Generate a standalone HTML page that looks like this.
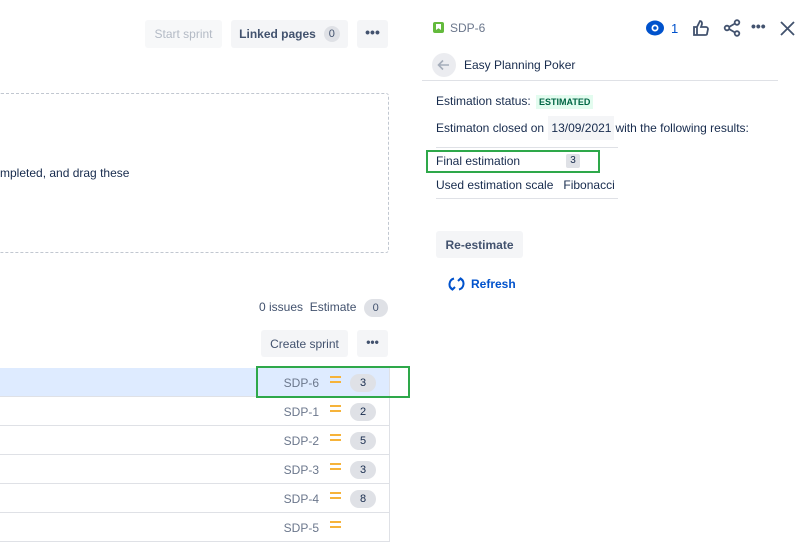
<!DOCTYPE html>
<html><head><style>
*{margin:0;padding:0;box-sizing:border-box}
body{width:806px;height:548px;overflow:hidden;background:#fff;font-family:"Liberation Sans",sans-serif;font-size:12px;color:#172b4d;position:relative}
.a{position:absolute}
.btn{position:absolute;background:#f4f5f7;border-radius:3px;display:flex;align-items:center;justify-content:center;color:#42526e}
.badge{display:inline-block;background:#dfe1e6;border-radius:10px;font-size:11px;text-align:center}
.row{position:absolute;left:0;width:390px;height:29px;border-bottom:1px solid #dfe1e6;border-right:1px solid #dfe1e6}
.row .k{position:absolute;right:70px;top:8px;color:#6b778c;font-size:12px}
.row .eq{position:absolute;left:330px;top:8px;width:11px;height:7px;border-top:2px solid #f6b33a;border-bottom:2px solid #f6b33a}
.row .b{position:absolute;left:350px;top:6px;width:26px;height:18px;line-height:18px}
</style></head><body>
<div class="btn" style="left:145px;top:20px;width:77px;height:28px;color:#b3bac5;background:#f7f8f9">Start sprint</div>
<div class="btn" style="left:231px;top:20px;width:117px;height:28px;font-weight:bold">Linked pages <span class="badge" style="margin-left:8px;width:16px;height:16px;line-height:16px;font-weight:normal">0</span></div>
<div class="btn" style="left:357px;top:20px;width:31px;height:28px;font-weight:bold;font-size:14px;padding-bottom:5px">•••</div>
<div class="a" style="left:-2px;top:93px;width:391px;height:160px;border:1px dashed #c1c7d0;border-radius:3px"></div>
<div class="a" style="left:0;top:166px;font-size:12px">mpleted, and drag these</div>
<div class="a" style="left:259px;top:299px;color:#42526e">0 issues&nbsp; Estimate <span class="badge" style="width:24px;height:18px;line-height:18px;margin-left:4px">0</span></div>
<div class="btn" style="left:261px;top:330px;width:87px;height:27px">Create sprint</div>
<div class="btn" style="left:357px;top:330px;width:31px;height:27px;font-weight:bold;font-size:12px;padding-bottom:4px">•••</div>
<div class="row" style="top:368px;background:#deebff"><span class="k">SDP-6</span><span class="eq"></span><span class="badge b">3</span></div>
<div class="row" style="top:397px"><span class="k">SDP-1</span><span class="eq"></span><span class="badge b">2</span></div>
<div class="row" style="top:426px"><span class="k">SDP-2</span><span class="eq"></span><span class="badge b">5</span></div>
<div class="row" style="top:455px"><span class="k">SDP-3</span><span class="eq"></span><span class="badge b">3</span></div>
<div class="row" style="top:484px"><span class="k">SDP-4</span><span class="eq"></span><span class="badge b">8</span></div>
<div class="row" style="top:513px"><span class="k">SDP-5</span><span class="eq"></span></div>
<div class="a" style="left:256px;top:366px;width:154px;height:32px;border:2px solid #2ea84a"></div>

<div class="a" style="left:433px;top:22px;width:11px;height:11px;background:#63ba3c;border-radius:2px"><div style="position:absolute;left:3px;top:2px;width:5px;height:6px;background:#fff;clip-path:polygon(0 0,100% 0,100% 100%,50% 70%,0 100%)"></div></div>
<div class="a" style="left:450px;top:21px;color:#6b778c">SDP-6</div>
<svg class="a" style="left:645px;top:19px" width="20" height="18" viewBox="0 0 20 18"><ellipse cx="10" cy="9" rx="9" ry="7.5" fill="#0052cc"/><circle cx="10" cy="9" r="3.5" fill="#fff"/><circle cx="10" cy="9" r="1.8" fill="#0052cc"/></svg>
<div class="a" style="left:671px;top:21px;color:#0052cc;font-size:13px">1</div>
<svg class="a" style="left:692px;top:19px" width="18" height="18" viewBox="0 0 18 18" fill="none" stroke="#42526e" stroke-width="1.8"><path d="M2 8h3v8H2zM5 8l3-6c2 0 2 2 2 3l-1 3h5c1 0 2 1 2 2l-1 5c0 1-1 1-2 1H5"/></svg>
<svg class="a" style="left:723px;top:19px" width="18" height="18" viewBox="0 0 18 18" fill="none" stroke="#42526e" stroke-width="1.8"><circle cx="4" cy="9" r="2.3"/><circle cx="14" cy="3.5" r="2.3"/><circle cx="14" cy="14.5" r="2.3"/><path d="M6 8l6-3.5M6 10l6 3.5"/></svg>
<div class="a" style="left:751px;top:18px;font-size:14px;font-weight:bold;color:#42526e">•••</div>
<svg class="a" style="left:780px;top:21px" width="15" height="15" viewBox="0 0 15 15" stroke="#42526e" stroke-width="1.8"><path d="M1 1L14 14M14 1L1 14"/></svg>
<div class="a" style="left:432px;top:53px;width:24px;height:24px;border-radius:50%;background:#ebecf0"></div>
<svg class="a" style="left:437px;top:58px" width="14" height="14" viewBox="0 0 14 14" fill="none" stroke="#a5adba" stroke-width="1.6"><path d="M12 7H2M6 2.5L1.5 7L6 11.5"/></svg>
<div class="a" style="left:464px;top:58px;font-size:12px">Easy Planning Poker</div>
<div class="a" style="left:422px;top:80px;width:356px;height:1px;background:#dfe1e6"></div>
<div class="a" style="left:436px;top:94px">Estimation status: <span style="background:#e3fcef;color:#006644;font-weight:bold;font-size:9px;padding:2px 3px;margin-left:2px">ESTIMATED</span></div>
<div class="a" style="left:436px;top:121px">Estimaton closed on <span style="background:#f4f5f7;padding:5px 3px;margin:0 1px">13/09/2021</span>with the following results:</div>
<div class="a" style="left:436px;top:147px;width:182px;height:1px;background:#dfe1e6"></div>
<div class="a" style="left:436px;top:154px">Final estimation</div>
<span class="a badge" style="left:566px;top:154px;width:14px;height:14px;line-height:14px;font-size:10px;border-radius:2px">3</span>
<div class="a" style="left:426px;top:150px;width:174px;height:23px;border:2px solid #2ea84a"></div>
<div class="a" style="left:436px;top:178px">Used estimation scale&nbsp;&nbsp;&nbsp;Fibonacci</div>
<div class="a" style="left:436px;top:198px;width:182px;height:1px;background:#dfe1e6"></div>
<div class="btn" style="left:436px;top:231px;width:87px;height:27px;font-weight:bold">Re-estimate</div>
<svg class="a" style="left:448px;top:276px" width="17" height="16" viewBox="0 0 17 16" fill="none" stroke="#0052cc" stroke-width="2"><path d="M6 2.5A6 6 0 0 0 4.5 13.5"/><path d="M11 13.5A6 6 0 0 0 12.5 2.5"/><path d="M2 11l2.5 2.5L7 11" /><path d="M10 5l2.5-2.5L15 5"/></svg>
<div class="a" style="left:471px;top:277px;color:#0052cc;font-weight:bold">Refresh</div>
</body></html>
